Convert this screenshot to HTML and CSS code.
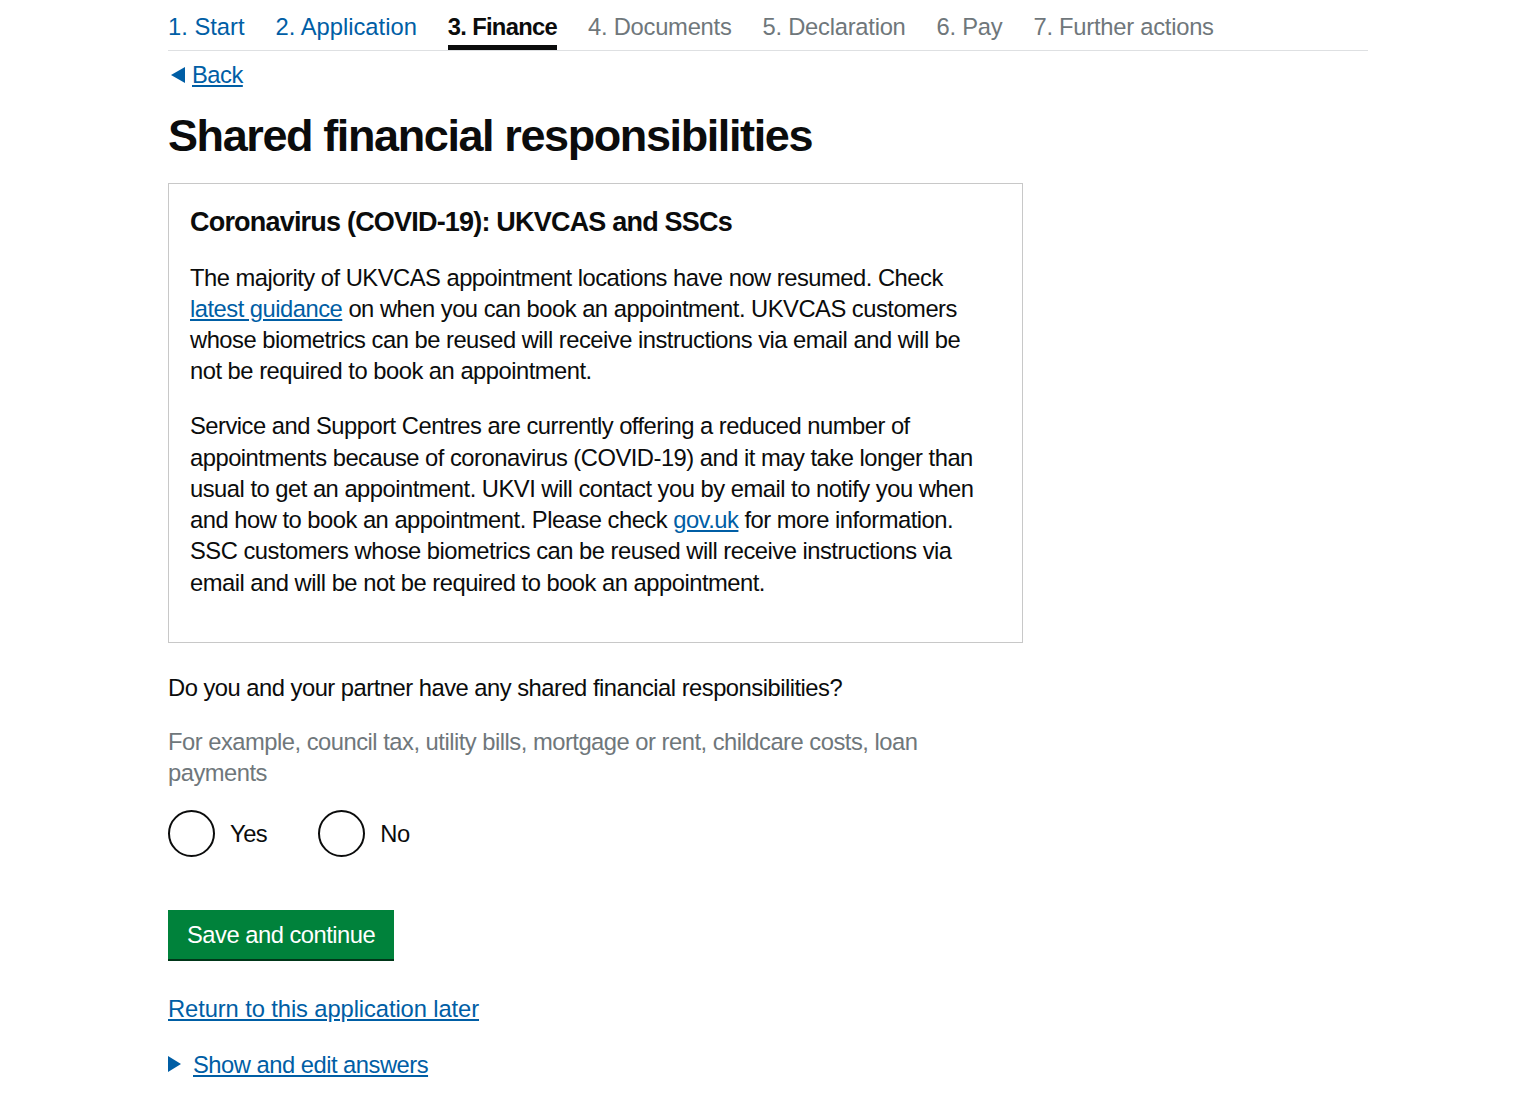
FILE: index.html
```html
<!DOCTYPE html>
<html lang="en">
<head>
<meta charset="utf-8">
<title>Shared financial responsibilities</title>
<link rel="stylesheet" href="styles.css">
</head>
<body>
<div class="page">
  <nav class="steps" aria-label="Progress">
    <ol class="steps-list">
      <li class="step"><a class="step-link" href="#">1. Start</a></li>
      <li class="step"><a class="step-link" href="#">2. Application</a></li>
      <li class="step step-current"><span class="step-label">3. Finance</span></li>
      <li class="step step-todo"><span class="step-label">4. Documents</span></li>
      <li class="step step-todo"><span class="step-label">5. Declaration</span></li>
      <li class="step step-todo"><span class="step-label">6. Pay</span></li>
      <li class="step step-todo"><span class="step-label">7. Further actions</span></li>
    </ol>
  </nav>

  <a class="back-link" href="#">
    <svg class="back-arrow" width="14" height="16" viewBox="0 0 14 16" aria-hidden="true"><path d="M0 8 L14 0 L14 16 Z" fill="#005ea5"/></svg>
    <span class="back-text">Back</span>
  </a>

  <main class="main">
    <h1 class="page-title">Shared financial responsibilities</h1>

    <div class="panel">
      <h2 class="panel-title">Coronavirus (COVID-19): UKVCAS and SSCs</h2>
      <p class="body">The majority of UKVCAS appointment locations have now resumed. Check <a class="link" href="#">latest guidance</a> on when you can book an appointment. UKVCAS customers whose biometrics can be reused will receive instructions via email and will be not be required to book an appointment.</p>
      <p class="body">Service and Support Centres are currently offering a reduced number of appointments because of coronavirus (COVID-19) and it may take longer than usual to get an appointment. UKVI will contact you by email to notify you when and how to book an appointment. Please check <a class="link" href="#">gov.uk</a> for more information. SSC customers whose biometrics can be reused will receive instructions via email and will be not be required to book an appointment.</p>
    </div>

    <fieldset class="question">
      <legend class="question-legend">Do you and your partner have any shared financial responsibilities?</legend>
      <div class="hint">For example, council tax, utility bills, mortgage or rent, childcare costs, loan payments</div>
      <div class="radios">
        <label class="radio">
          <input class="radio-input" type="radio" name="shared" value="yes">
          <span class="radio-circle"></span>
          <span class="radio-label">Yes</span>
        </label>
        <label class="radio">
          <input class="radio-input" type="radio" name="shared" value="no">
          <span class="radio-circle"></span>
          <span class="radio-label">No</span>
        </label>
      </div>
    </fieldset>

    <button class="button" type="submit">Save and continue</button>

    <p class="return"><a class="link return-link" href="#">Return to this application later</a></p>

    <details class="details">
      <summary class="summary">
        <svg class="summary-arrow" width="13" height="16" viewBox="0 0 13 16" aria-hidden="true"><path d="M0 0 L13 8 L0 16 Z" fill="#005ea5"/></svg>
        <span class="summary-text">Show and edit answers</span>
      </summary>
    </details>
  </main>
</div>
</body>
</html>
```

FILE: styles.css
```css
html, body {
  margin: 0;
  padding: 0;
  background: #ffffff;
}

body {
  font-family: "Liberation Sans", Arial, sans-serif;
  font-size: 23.75px;
  line-height: 31.25px;
  letter-spacing: -0.5px;
  color: #0b0c0c;
}

.page {
  width: 1200px;
  margin: 0 auto;
}

/* Progress steps */
.steps-list {
  display: flex;
  gap: 31px;
  list-style: none;
  margin: 0;
  padding: 0;
  border-bottom: 1px solid #dee0e2;
  letter-spacing: 0;
}

.step {
  padding-top: 11px;
}

.step-link,
.step-label {
  display: block;
  padding-bottom: 3px;
  border-bottom: 5px solid transparent;
  white-space: nowrap;
}

.step-link {
  color: #005ea5;
  text-decoration: none;
}

.step-current .step-label {
  font-weight: 700;
  color: #0b0c0c;
  border-bottom-color: #0b0c0c;
  letter-spacing: -0.7px;
}

.step-todo .step-label {
  color: #6f777b;
  letter-spacing: -0.25px;
}

/* Back link */
.back-link {
  display: inline-flex;
  align-items: center;
  gap: 7px;
  margin-top: 8px;
  padding-left: 3px;
  color: #005ea5;
  text-decoration: none;
}

.back-arrow {
  display: block;
  flex: none;
}

.back-text {
  text-decoration: underline;
}

/* Main */
.main {
  width: 855px;
}

.page-title {
  margin: 20px 0 22px;
  font-size: 45px;
  line-height: 50px;
  font-weight: 700;
  letter-spacing: -1.4px;
}

.panel {
  border: 1px solid #c8c8c8;
  padding: 23px 35px 20px 21px;
}

.panel-title {
  margin: 0 0 24px;
  font-size: 27px;
  line-height: 31px;
  font-weight: 700;
  letter-spacing: -0.8px;
}

.body {
  margin: 0 0 23.75px;
}

.link {
  color: #005ea5;
  text-decoration: underline;
}

.return-link {
  letter-spacing: -0.1px;
}

/* Question */
.question {
  margin: 29px 0 0;
  padding: 0;
  border: 0;
  min-width: 0;
}

.question-legend {
  padding: 0;
  margin: 0 0 23px;
}

.hint {
  color: #6f777b;
  width: 800px;
}

.radios {
  display: flex;
  gap: 51px;
  margin-top: 22px;
}

.radio {
  display: flex;
  align-items: center;
  gap: 15px;
  cursor: pointer;
}

.radio-input {
  position: absolute;
  opacity: 0;
  width: 1px;
  height: 1px;
  margin: 0;
}

.radio-circle {
  display: block;
  box-sizing: border-box;
  width: 47px;
  height: 47px;
  border: 2.5px solid #0b0c0c;
  border-radius: 50%;
  flex: none;
}

.radio-label {
  display: block;
}

/* Button */
.button {
  display: inline-block;
  margin-top: 53px;
  padding: 9px 19px 8px;
  border: 0;
  border-radius: 0;
  background: #00823b;
  box-shadow: 0 2px 0 #003618;
  color: #ffffff;
  font-family: inherit;
  font-size: 23.75px;
  line-height: 31.25px;
  letter-spacing: -0.5px;
  cursor: pointer;
}

.return {
  margin: 34px 0 0;
}

/* Details */
.details {
  margin-top: 25px;
}

.summary {
  display: flex;
  align-items: center;
  gap: 12px;
  list-style: none;
  color: #005ea5;
  cursor: pointer;
}

.summary::-webkit-details-marker {
  display: none;
}

.summary-arrow {
  display: block;
  flex: none;
}

.summary-text {
  text-decoration: underline;
}
```
